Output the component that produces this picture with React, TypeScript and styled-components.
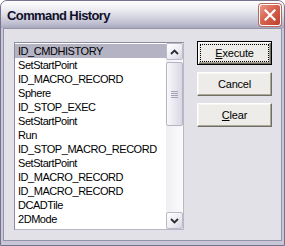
import React, { useState } from "react";
import styled, { createGlobalStyle } from "styled-components";

const GlobalStyle = createGlobalStyle`
    html, body {
        margin: 0;
        padding: 0;
        background: #ffffff;
    }
    body {
        font-family: "Liberation Sans", Arial, sans-serif;
        font-size: 11px;
        color: #000000;
    }
`;

const commands = [
    "ID_CMDHISTORY",
    "SetStartPoint",
    "ID_MACRO_RECORD",
    "Sphere",
    "ID_STOP_EXEC",
    "SetStartPoint",
    "Run",
    "ID_STOP_MACRO_RECORD",
    "SetStartPoint",
    "ID_MACRO_RECORD",
    "ID_MACRO_RECORD",
    "DCADTile",
    "2DMode",
];

const Window = styled.div`
    box-sizing: border-box;
    width: 285px;
    height: 246px;
    display: flex;
    flex-direction: column;
    border: 1px solid #74738e;
    border-radius: 7px 7px 0 0;
    background: #c8c7d7;
    overflow: hidden;
`;

const TitleBar = styled.div`
    height: 27px;
    flex: none;
    display: flex;
    align-items: center;
    justify-content: space-between;
    padding: 0 3px 0 6px;
    background: linear-gradient(to bottom, #ffffff 0%, #f1f1f5 25%, #d9d9e3 55%, #bdbdcf 85%, #a9a9be 100%);
`;

const Title = styled.span`
    font-family: Tahoma, "Liberation Sans", Arial, sans-serif;
    font-weight: bold;
    font-size: 13px;
    letter-spacing: -0.6px;
    color: #10102a;
    margin-top: 1px;
`;

const CloseButton = styled.button`
    box-sizing: border-box;
    width: 22px;
    height: 22px;
    padding: 0;
    margin-top: 1px;
    border: 1px solid #ffffff;
    border-radius: 3px;
    background: linear-gradient(135deg, #ec9888 0%, #d6644f 45%, #bf412d 100%);
    box-shadow: 0 0 0 1px #b86a60;
    display: flex;
    align-items: center;
    justify-content: center;
`;

const Frame = styled.div`
    flex: 1;
    display: flex;
    padding: 0 2px 4px 2px;
`;

const Client = styled.div`
    flex: 1;
    border: 1px solid #9493aa;
    background: #e2e1e7;
    padding: 12px 9px 9px 10px;
    display: grid;
    grid-template-columns: 170px 75px;
    column-gap: 13px;
    align-items: start;
`;

const ListBox = styled.div`
    box-sizing: border-box;
    margin-top: 1px;
    height: 188px;
    display: flex;
    border: 1px solid #8b8a9e;
    border-right-color: #b9b8c8;
    border-bottom-color: #b9b8c8;
    background: #ffffff;
`;

const Items = styled.ul`
    list-style: none;
    margin: 0;
    padding: 1px 0 0 0;
    flex: 1;
    overflow: hidden;
`;

const Item = styled.li<{ $selected: boolean }>`
    height: 14px;
    line-height: 14px;
    padding-left: 3px;
    white-space: nowrap;
    letter-spacing: -0.45px;
    background: ${p => (p.$selected ? "#b4b3c4" : "transparent")};
    cursor: default;
`;

const ScrollBar = styled.div`
    width: 17px;
    flex: none;
    display: flex;
    flex-direction: column;
    background: linear-gradient(to right, #efeff3, #fbfbfc);
`;

const ArrowButton = styled.div`
    box-sizing: border-box;
    height: 17px;
    flex: none;
    border: 1px solid #bbbac9;
    border-radius: 2px;
    background: linear-gradient(135deg, #ffffff 0%, #ecebf1 60%, #d5d4e0 100%);
    display: flex;
    align-items: center;
    justify-content: center;
`;

const Track = styled.div`
    flex: 1;
    display: flex;
    flex-direction: column;
    padding-top: 2px;
`;

const Thumb = styled.div`
    box-sizing: border-box;
    height: 64px;
    border: 1px solid #b5b4c5;
    border-radius: 2px;
    background: linear-gradient(to right, #f8f8fb 0%, #e9e8f0 50%, #d9d8e4 100%);
    display: flex;
    flex-direction: column;
    align-items: center;
    justify-content: center;
    gap: 1px;
`;

const Grip = styled.span`
    width: 7px;
    height: 1px;
    background: #a3a2b6;
`;

const Buttons = styled.div`
    display: flex;
    flex-direction: column;
    gap: 7px;
`;

const PushButton = styled.button<{ $default?: boolean }>`
    box-sizing: border-box;
    height: 24px;
    width: 75px;
    padding: 2px;
    margin: 0;
    font-family: "Liberation Sans", Arial, sans-serif;
    font-size: 11px;
    letter-spacing: -0.2px;
    color: #000000;
    background: #edece8;
    border: 1px solid;
    border-color: ${p => (p.$default ? "#000000" : "#ffffff #716f64 #716f64 #ffffff")};
    box-shadow: ${p =>
        p.$default
            ? "inset 1px 1px 0 #ffffff, inset -1px -1px 0 #716f64, inset -2px -2px 0 #aca899"
            : "inset -1px -1px 0 #aca899, inset 1px 1px 0 #f6f6f3"};
    border-radius: 0;
    display: flex;
    align-items: stretch;
    cursor: default;
`;

const Focus = styled.span<{ $focused?: boolean }>`
    flex: 1;
    display: flex;
    align-items: center;
    justify-content: center;
    border: 1px dotted ${p => (p.$focused ? "#000000" : "transparent")};
`;

const Key = styled.span`
    text-decoration: underline;
`;

const Chevron: React.FC<{ up?: boolean }> = ({ up }) => (
    <svg width="9" height="6" viewBox="0 0 9 6">
        <polyline
            points={up ? "1,5 4.5,1.5 8,5" : "1,1 4.5,4.5 8,1"}
            fill="none"
            stroke="#2a2a3a"
            strokeWidth="1.8"
        />
    </svg>
);

export default function App() {
    const [selected, setSelected] = useState(0);

    return (
        <>
            <GlobalStyle />
            <Window>
                <TitleBar>
                    <Title>Command History</Title>
                    <CloseButton type="button">
                        <svg width="12" height="12" viewBox="0 0 12 12">
                            <path d="M1.5 1.5 L10.5 10.5 M10.5 1.5 L1.5 10.5" stroke="#ffffff" strokeWidth="2.2" strokeLinecap="square" />
                        </svg>
                    </CloseButton>
                </TitleBar>
                <Frame>
                    <Client>
                        <ListBox>
                            <Items>
                                {commands.map((cmd, i) => (
                                    <Item key={i} $selected={i === selected} onClick={() => setSelected(i)}>
                                        {cmd}
                                    </Item>
                                ))}
                            </Items>
                            <ScrollBar>
                                <ArrowButton>
                                    <Chevron up />
                                </ArrowButton>
                                <Track>
                                    <Thumb>
                                        <Grip />
                                        <Grip />
                                        <Grip />
                                        <Grip />
                                    </Thumb>
                                </Track>
                                <ArrowButton>
                                    <Chevron />
                                </ArrowButton>
                            </ScrollBar>
                        </ListBox>
                        <Buttons>
                            <PushButton type="button" $default>
                                <Focus $focused>
                                    <span>
                                        <Key>E</Key>xecute
                                    </span>
                                </Focus>
                            </PushButton>
                            <PushButton type="button">
                                <Focus>Cancel</Focus>
                            </PushButton>
                            <PushButton type="button">
                                <Focus>
                                    <span>
                                        <Key>C</Key>lear
                                    </span>
                                </Focus>
                            </PushButton>
                        </Buttons>
                    </Client>
                </Frame>
            </Window>
        </>
    );
}
